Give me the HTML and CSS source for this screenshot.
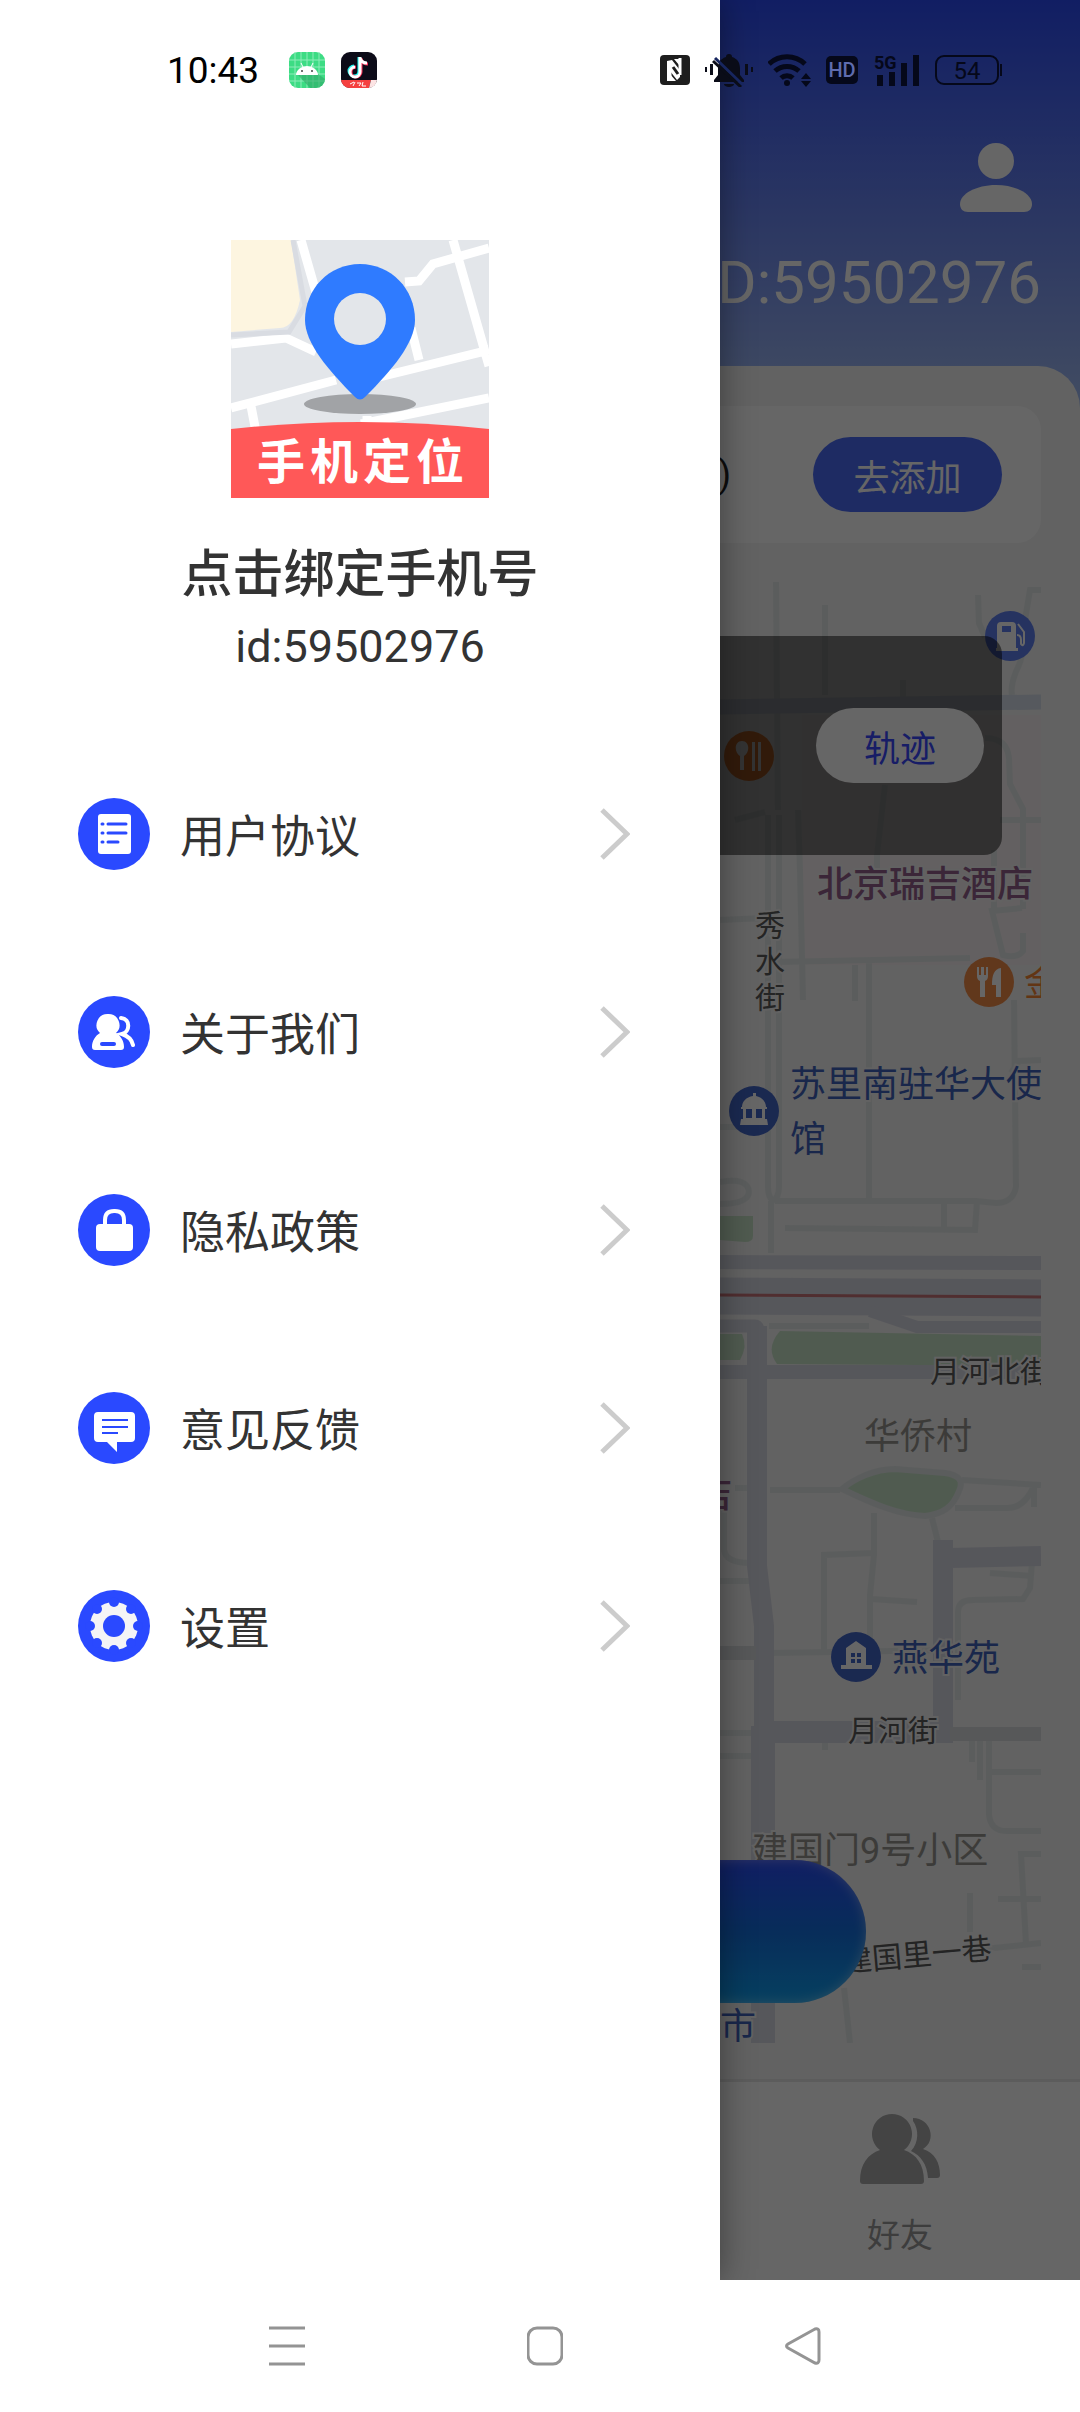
FILE: index.html
```html
<!DOCTYPE html>
<html lang="zh-CN">
<head>
    <meta charset="UTF-8">
    <meta name="viewport" content="width=device-width, initial-scale=1.0">
    <title>手机定位</title>
    <link rel="stylesheet" href="styles.css">
</head>
<body>

    <div class="app">

        <!-- Status bar -->
        <div class="status-bar">
            <div class="status-left">
                <span class="clock">10:43</span>
                <svg class="app-icon" viewBox="0 0 36 36">
                    <rect width="36" height="36" rx="9" fill="#3ddc84"/>
                    <path d="M6 0v36M12 0v36M18 0v36M24 0v36M30 0v36M0 8h36M0 15h36M0 22h36M0 29h36" stroke="#8eecb9" stroke-width="1"/>
                    <path d="M9 23l12 13h6a9 9 0 0 0 9-9l-7-5z" fill="#2fa866" opacity=".6"/>
                    <path d="M7 23a11 9 0 0 1 22 0z" fill="#fff"/>
                    <path d="M12 11l2 4M24 11l-2 4" stroke="#fff" stroke-width="1"/>
                    <circle cx="13" cy="19" r="1" fill="#444"/>
                    <circle cx="23" cy="19" r="1" fill="#444"/>
                </svg>
                <svg class="app-icon" viewBox="0 0 36 36">
                    <rect width="36" height="36" rx="9" fill="#0c0b18"/>
                    <path d="M0 28h30l-2 8H9a9 9 0 0 1-9-8z" fill="#f5403f"/>
                    <path d="M30 28h6a9 9 0 0 1-8 8z" fill="#fde4e4"/>
                    <g fill="none" stroke-width="3">
                        <path d="M18 5v14a5 5 0 1 1-5-5M18 6c1 3 3 5 7 5" stroke="#25f4ee"/>
                        <path d="M20 6v14a5 5 0 1 1-5-5M20 7c1 3 3 5 7 5" stroke="#fe2c55"/>
                        <path d="M19 5v15a5 5 0 1 1-5-5M19 6c1 3 3 5 7 5" stroke="#fff"/>
                    </g>
                    <path d="M9 32l4-2M12 34l2-4M16 31h4l-2 3M22 30l-1 4h4" stroke="#fff" fill="none"/>
                </svg>
            </div>
            <div class="status-right">
                <svg width="30" height="30" viewBox="0 0 30 30">
                    <rect width="30" height="30" rx="4" fill="#1e1e1e"/>
                    <path d="M7 26V6l5-1 7 9v-4l-5-6h6v18l-3 3-7-9v3l6 7z" fill="#fff"/>
                    <path d="M10 9v17M20 20V3" stroke="#fff" stroke-width="3"/>
                    <path d="M13 12l5 7" stroke="#1e1e1e" stroke-width="3"/>
                </svg>
                <svg width="48" height="34" viewBox="0 0 48 34" fill="#0a0c18">
                    <path d="M24 1a3 3 0 0 1 3 3c6 2 8 6 8 12v6l4 5v2H9v-2l4-5v-6c0-6 2-10 8-12a3 3 0 0 1 3-3zM19 31h10a5 3 0 0 1-10 0z"/>
                    <path d="M10 5l28 27" stroke="#17265f" stroke-width="3"/>
                    <path d="M8 8l28 26" stroke="#0a0c18" stroke-width="3"/>
                    <path d="M0 14h2v5h-2zM5 11h3v11h-3zM40 11h3v11h-3zM46 14h2v5h-2z"/>
                </svg>
                <svg width="43" height="34" viewBox="0 0 43 34" fill="none" stroke="#05081a" stroke-width="5">
                    <path d="M1 11a26 26 0 0 1 36 0M7 18a18 18 0 0 1 24 0M13 25a9 9 0 0 1 12 0"/>
                    <circle cx="19" cy="30" r="3" fill="#05081a" stroke="none"/>
                    <path d="M38 20l5 6h-10zM38 34l5-6h-10z" fill="#05081a" stroke="none"/>
                </svg>
                <svg width="32" height="28" viewBox="0 0 32 28">
                    <rect width="32" height="28" rx="5" fill="#05081a"/>
                    <text x="16" y="21" class="hd-text">HD</text>
                </svg>
                <svg width="47" height="36" viewBox="0 0 47 36" fill="#05081a">
                    <text x="1" y="17" class="net-text">5G</text>
                    <path d="M4 23h6v11h-6zM16 20h6v14h-6zM28 11h6v23h-6zM40 3h6v31h-6z"/>
                </svg>
                <svg width="68" height="30" viewBox="0 0 68 30">
                    <rect x="1" y="1" width="62" height="28" rx="8" fill="none" stroke="#05081a" stroke-width="2"/>
                    <rect x="65" y="9" width="2" height="12" fill="#05081a"/>
                    <text x="32" y="24" class="battery-text">54</text>
                </svg>
            </div>
        </div>

        <!-- Home page under the drawer -->
        <header>
            <svg class="user-icon" viewBox="0 0 72 70" fill="#fff">
                <circle cx="36" cy="18" r="18"/>
                <path d="M36 42c20 0 36 9 36 19 0 5-3 8-8 8H8c-5 0-8-3-8-8 0-10 16-19 36-19z"/>
            </svg>
            <p class="user-id">ID:59502976</p>
        </header>

        <main>
            <div class="add-card">
                <span>)</span>
                <button class="btn btn-add">去添加</button>
            </div>

            <div class="map-box">
                <svg class="map" viewBox="39 582 1002 1461" preserveAspectRatio="xMaxYMin slice">
                    <path d="M802 715h239v250H802z" fill="#f8f1f2"/>

                    <!-- Parks -->
                    <g fill="#c9e4c9">
                        <path d="M720 1216h33v20q0 6-8 6l-25-2z"/>
                        <path d="M720 1334h22q6 12-2 26h-20z"/>
                        <path d="M780 1331l261 5v30l-264-2q-12-16 3-33z"/>
                    </g>
                    <path d="M842 1489c12-10 32-20 53-20l50 4c14 2 19 8 14 18-6 16-16 23-34 25-26-1-52-12-83-27z" fill="#c9e4c9" stroke="#e4e9e9" stroke-width="6"/>

                    <!-- Small streets -->
                    <g fill="none" stroke="#e4e9e9" stroke-width="6">
                        <path d="M776 582l2 228M825 605v90M903 680v18M798 810l2 60 3 130M768 815v372q0 10 5 14M779 815v372q0 10-6 14M771 1201v52"/>
                        <path d="M978 595l1 28 6 14M1041 590h-11l-5 30q0 30-6 45-9 18-7 30M985 738q22 0 24 20l1 26 13 25v100M1000 820h41M885 785l-8 70v20M994 850v60M1022 908l-30 3 11 44q14 4 20-4v-18"/>
                        <path d="M720 920l45-2M775 962l195-4M855 965v36M869 962v236M735 820l30-8"/>
                        <path d="M1014 1000l2 187q-3 16-20 16l-20-2H775M785 1228l190 2 2-29M944 1203v26M1041 1060l-22 1-8 12M720 1182q28-5 29 10-1 12-29 12M720 1127h20"/>
                        <path d="M770 1490h70M962 1480l79 5M955 1508h53q16 0 26-22v21M874 1513v42l-4 40v55M874 1553l-50 2v96M772 1653l178-3M871 1599l46 3M932 1518l6 24"/>
                        <path d="M1032 1562l-2 26-7 11-50 1q-15 0-15 12v88M990 1573l42 3M720 1581h35M724 1510v40q2 13 26 13M720 1733h35M720 1756h32M735 1488h15M769 1326h100"/>
                        <path d="M972 1740v22M980 1740v40M989 1740v75q2 16 17 16h35M990 1772h51M825 1742v8M1041 1854h-20l5 90M998 1899h43M970 1893v39M975 1950l66-7M1022 1967h19M844 1988l6 55"/>
                    </g>

                    <!-- Main roads -->
                    <g fill="none" stroke="#d8d9e4">
                        <path d="M720 707l321-5" stroke="#d6dfea" stroke-width="15"/>
                        <path d="M720 1262l321 1" stroke-width="14"/>
                        <path d="M720 1296l321 2" stroke-width="37"/>
                        <path d="M870 1311l47 16h124" stroke-width="12"/>
                        <path d="M720 1326h35q4 0 4 12" stroke-width="13"/>
                        <path d="M757 1326v240l7 60v100l-1 317" stroke-width="20"/>
                        <path d="M763 1726v317" stroke-width="24"/>
                        <path d="M720 1372h321" stroke-width="14"/>
                        <path d="M943 1540v200M950 1558l91-2" stroke-width="20"/>
                        <path d="M755 1732h198" stroke-width="22"/>
                        <path d="M950 1734h91M720 1653h36" stroke="#d9dcdf" stroke-width="14"/>
                    </g>
                    <path d="M720 1295l321 2" stroke="#c87478" stroke-width="3"/>

                    <!-- Places -->
                    <circle cx="1010" cy="636" r="25" fill="#6080f0"/>
                    <path d="M997 626q0-4 4-4h11q4 0 4 4v22h2v3h-22v-3h1z" fill="#fff"/>
                    <path d="M1002 626h9v6h-9z" fill="#6080f0"/>
                    <path d="M1017 635q4 0 4 5v4q2 3 3-1v-11l-6-8" fill="none" stroke="#fff" stroke-width="2"/>

                    <circle cx="749" cy="756" r="25" fill="#f58634"/>
                    <path d="M742 741c8 0 8 12 2 15v14h-4v-14c-6-3-6-15 2-15zM752 742h3v29h-3zM758 742h3v29h-3z" fill="#fff"/>

                    <circle cx="989" cy="982" r="25" fill="#f28c48"/>
                    <path d="M977 967v9q0 4 3 5v16h5v-16q3-1 3-5v-9h-2v8h-2v-8h-3v8h-2v-8zM1001 968v29h-5v-12h-4c0-10 2-16 9-17z" fill="#fff"/>

                    <circle cx="754" cy="1111" r="25" fill="#4366c8"/>
                    <path d="M753 1093h3v3c6 1 10 6 10 11h1v2h-2v10h2l1 6h-28l1-6h2v-10h-2v-2h1c0-5 4-10 11-11z" fill="#fff"/>
                    <path d="M746 1109h6v9h-6zM756 1109h6v9h-6z" fill="#4366c8"/>

                    <circle cx="856" cy="1657" r="25" fill="#4366c8"/>
                    <path d="M856 1641l10 7v17h6v4h-31v-4h5v-17z" fill="#fff"/>
                    <path d="M851 1653h4v4h-4zM857 1653h4v4h-4zM851 1659h4v4h-4zM857 1659h4v4h-4z" fill="#4366c8"/>

                    <g class="place">
                        <text x="817" y="897" class="hotel">北京瑞吉酒店</text>
                        <text x="696" y="1508" class="hotel">店</text>
                        <text x="1024" y="996" class="food">金</text>
                        <text x="790" y="1097" class="site">苏里南驻华大使</text>
                        <text x="790" y="1152" class="site">馆</text>
                        <text x="892" y="1671" class="site">燕华苑</text>
                        <text x="720" y="2039" class="site">市</text>
                        <text x="864" y="1449" class="area">华侨村</text>
                        <text x="752" y="1863" class="area">建国门9号小区</text>
                    </g>
                    <g class="street">
                        <text x="755" y="936">秀</text>
                        <text x="755" y="972">水</text>
                        <text x="755" y="1008">街</text>
                        <text x="930" y="1382">月河北街</text>
                        <text x="848" y="1741">月河街</text>
                        <text x="843" y="1972" transform="rotate(-5 843 1972)">建国里一巷</text>
                    </g>
                </svg>

                <div class="track-panel">
                    <button class="btn btn-track">轨迹</button>
                </div>
                <div class="locate-pill"></div>
            </div>
        </main>

        <nav class="tab-bar">
            <a href="#friends" class="tab">
                <svg width="80" height="70" viewBox="0 0 80 70" fill="#aaa">
                    <path d="M32 0a20 20 0 0 1 12 36c12 4 20 14 20 31 0 2-1 3-3 3H3c-2 0-3-1-3-3 0-17 8-27 20-31A20 20 0 0 1 32 0z"/>
                    <path d="M53 4c18 0 24 23 10 31 12 4 17 14 17 26 0 2-1 3-3 3h-9C67 50 61 42 51 37c8-8 8-22 2-30z"/>
                </svg>
                <span>好友</span>
            </a>
        </nav>

        <div class="mask"></div>

        <!-- Side drawer -->
        <aside class="drawer">
            <svg class="logo" viewBox="0 0 258 258">
                <rect width="258" height="258" fill="#e3e6ea"/>
                <path d="M0 0h60l9 60q-6 28-20 28L0 92z" fill="#fdf5e0"/>
                <g fill="none" stroke="#fff" stroke-width="9">
                    <path d="M70 0l16 56M0 104l55-6 30 14M0 168l105-28M128 142l130-32M174 42l14-1 14-17 56-16M222 0l36 126M180 88l8 32M20 166l5 26M130 184l128-26M136 176v14"/>
                    <path d="M62 0l12 66-16 26-58 3" stroke="#d9dce2" stroke-width="5"/>
                </g>
                <ellipse cx="129" cy="164" rx="56" ry="10" fill="#a1a3a6"/>
                <path d="M129 24c31 0 55 25 55 56 0 23-23 50-50 77q-5 5-10 0C97 130 74 103 74 80c0-31 24-56 55-56z" fill="#2f7bff"/>
                <circle cx="129" cy="79" r="26" fill="#e3e6ea"/>
                <path d="M0 189q129-14 258 0v69H0z" fill="#ff5858"/>
                <text x="132" y="239" class="logo-text">手机定位</text>
            </svg>
            <h1>点击绑定手机号</h1>
            <p class="drawer-id">id:59502976</p>

            <ul class="menu">
                <li>
                    <a href="#agreement">
                        <svg class="menu-icon" viewBox="0 0 72 72">
                            <circle cx="36" cy="36" r="36" fill="#2a49ff"/>
                            <rect x="20" y="16" width="33" height="40" rx="3" fill="#fff"/>
                            <g stroke="#2a49ff" stroke-width="3" stroke-linecap="round">
                                <path d="M24 26h1M30 26h18M24 35h1M30 35h18M24 44h1M30 44h10"/>
                            </g>
                        </svg>
                        <span>用户协议</span>
                        <svg class="arrow" viewBox="0 0 30 52"><path d="M2 2l25 24L2 50"/></svg>
                    </a>
                </li>
                <li>
                    <a href="#about">
                        <svg class="menu-icon" viewBox="0 0 72 72">
                            <circle cx="36" cy="36" r="36" fill="#2a49ff"/>
                            <path d="M30 18a11 11 0 0 1 8 19c5 3 8 8 8 14 0 2-1 3-3 3H17c-2 0-3-1-3-3 0-6 3-11 8-14a11 11 0 0 1 8-19z" fill="#fff"/>
                            <path d="M24 48h12" stroke="#2a49ff" stroke-width="4" stroke-linecap="round"/>
                            <path d="M43 22c10 1 9 14 1 16 6 2 10 6 11 11" fill="none" stroke="#fff" stroke-width="4" stroke-linecap="round"/>
                        </svg>
                        <span>关于我们</span>
                        <svg class="arrow" viewBox="0 0 30 52"><path d="M2 2l25 24L2 50"/></svg>
                    </a>
                </li>
                <li>
                    <a href="#privacy">
                        <svg class="menu-icon" viewBox="0 0 72 72">
                            <circle cx="36" cy="36" r="36" fill="#2a49ff"/>
                            <rect x="18" y="30" width="37" height="27" rx="4" fill="#fff"/>
                            <path d="M27 31v-5q0-9 9-9h1q9 0 9 9v5" fill="none" stroke="#fff" stroke-width="4"/>
                        </svg>
                        <span>隐私政策</span>
                        <svg class="arrow" viewBox="0 0 30 52"><path d="M2 2l25 24L2 50"/></svg>
                    </a>
                </li>
                <li>
                    <a href="#feedback">
                        <svg class="menu-icon" viewBox="0 0 72 72">
                            <circle cx="36" cy="36" r="36" fill="#2a49ff"/>
                            <path d="M20 20h33q4 0 4 4v22q0 4-4 4H39v10L29 50h-9q-4 0-4-4V24q0-4 4-4z" fill="#fff"/>
                            <path d="M24 28h26M24 35h26M24 41h16" stroke="#2a49ff" stroke-width="2"/>
                        </svg>
                        <span>意见反馈</span>
                        <svg class="arrow" viewBox="0 0 30 52"><path d="M2 2l25 24L2 50"/></svg>
                    </a>
                </li>
                <li>
                    <a href="#settings">
                        <svg class="menu-icon" viewBox="0 0 72 72">
                            <circle cx="36" cy="36" r="36" fill="#2a49ff"/>
                            <circle cx="36" cy="36" r="24" fill="#f4f4f6"/>
                            <g fill="#2a49ff">
                                <circle cx="36" cy="36" r="11"/>
                                <circle cx="36" cy="12" r="5"/>
                                <circle cx="53" cy="19" r="5"/>
                                <circle cx="60" cy="36" r="5"/>
                                <circle cx="53" cy="53" r="5"/>
                                <circle cx="36" cy="60" r="5"/>
                                <circle cx="19" cy="53" r="5"/>
                                <circle cx="12" cy="36" r="5"/>
                                <circle cx="19" cy="19" r="5"/>
                            </g>
                        </svg>
                        <span>设置</span>
                        <svg class="arrow" viewBox="0 0 30 52"><path d="M2 2l25 24L2 50"/></svg>
                    </a>
                </li>
            </ul>
        </aside>
    </div>

    <!-- System navigation -->
    <footer>
        <button aria-label="Recent apps">
            <svg width="36" height="44" viewBox="0 0 36 44"><path d="M0 4h36M0 22h36M0 40h36"/></svg>
        </button>
        <button aria-label="Home">
            <svg width="36" height="44" viewBox="0 0 36 44"><rect x="1" y="4" width="34" height="36" rx="9"/></svg>
        </button>
        <button aria-label="Back">
            <svg width="36" height="44" viewBox="0 0 36 44"><path d="M30 5L3 20q-3 2 0 4l27 15q4 1 4-3V8q0-4-4-3z"/></svg>
        </button>
    </footer>

</body>
</html>
```
FILE: styles.css
```css
* {
    box-sizing: border-box;
}

body {
    font-family: Roboto, "Noto Sans CJK SC", sans-serif;
    color: #333;
    background-color: #fff;
    margin: 0;
    min-height: 100vh;
    display: flex;
    flex-direction: column;
}

h1, p, ul {
    margin: 0;
    padding: 0;
}

a {
    color: inherit;
    text-decoration: none;
}

button {
    border: none;
    background: none;
    padding: 0;
    font-family: inherit;
    cursor: pointer;
}

svg {
    display: block;
    flex-shrink: 0;
}

.app {
    flex: 1;
    position: relative;
    overflow: hidden;
    display: flex;
    flex-direction: column;
    background: linear-gradient(#2c4cf8, #a8c2f4 420px);
}

/* Status bar, stays above the drawer */
.status-bar {
    position: absolute;
    top: 0;
    left: 0;
    right: 0;
    z-index: 3;
    height: 140px;
    padding: 0 77px 0 167px;
    display: flex;
    align-items: center;
    justify-content: space-between;
}

.status-left {
    display: flex;
    align-items: center;
    gap: 16px;
}

.clock {
    color: #000;
    font-size: 37px;
    margin-right: 14px;
}

.app-icon {
    width: 36px;
    height: 36px;
}

.status-right {
    display: flex;
    align-items: center;
    gap: 15px;
}

.hd-text {
    font-size: 20px;
    font-weight: 500;
    fill: #5f6cae;
    text-anchor: middle;
}

.net-text {
    font-size: 18px;
    font-weight: 700;
}

.battery-text {
    font-size: 24px;
    fill: #05081a;
    text-anchor: middle;
}

/* Home page */
header {
    height: 366px;
    padding: 143px 39px 0;
    display: flex;
    flex-direction: column;
    align-items: flex-end;
    gap: 34px;
    color: #fff;
}

.user-icon {
    width: 72px;
    height: 70px;
    margin-right: 9px;
}

.user-id {
    font-size: 60px;
    line-height: 72px;
}

main {
    flex: 1;
    display: flex;
    flex-direction: column;
    gap: 39px;
    padding: 40px 39px 36px;
    background-color: #f6f6f6;
    border-radius: 42px 42px 0 0;
}

.add-card {
    display: flex;
    align-items: center;
    justify-content: flex-end;
    gap: 82px;
    padding: 30px 39px;
    height: 137px;
    background-color: #fff;
    border-radius: 24px;
    color: #222;
    font-size: 36px;
}

.btn {
    height: 75px;
    border-radius: 38px;
    font-size: 36px;
}

.btn-add {
    width: 189px;
    background-color: #4b6cf8;
    color: #fff;
}

.map-box {
    flex: 1;
    position: relative;
    min-height: 1200px;
    overflow: hidden;
    background-color: #f4f4f4;
}

.map {
    position: absolute;
    width: 100%;
    height: 100%;
}

.place {
    font-size: 36px;
    stroke: #f4f4f4;
    stroke-width: 4px;
    paint-order: stroke;
}

.street {
    font-size: 30px;
    fill: #5a5a5a;
    stroke: #f4f4f4;
    stroke-width: 4px;
    paint-order: stroke;
}

.hotel {
    fill: #94608c;
    font-weight: 500;
}

.food {
    fill: #f58634;
}

.site {
    fill: #4062bc;
}

.area {
    fill: #96948e;
}

.track-panel {
    position: absolute;
    top: 54px;
    left: 39px;
    right: 39px;
    height: 219px;
    padding: 0 18px;
    display: flex;
    align-items: center;
    justify-content: flex-end;
    background-color: rgba(0, 0, 0, 0.5);
    border-radius: 18px;
}

.btn-track {
    width: 168px;
    background-color: #fff;
    color: #3a4aff;
}

.locate-pill {
    position: absolute;
    bottom: 40px;
    left: 50%;
    width: 652px;
    height: 143px;
    margin-left: -326px;
    border-radius: 72px;
    background: linear-gradient(#2a4cf8, #1470e0 50%, #10a0f0);
    box-shadow: inset 0 0 12px rgba(255, 255, 255, 0.4);
}

.tab-bar {
    height: 201px;
    display: flex;
    justify-content: flex-end;
    background-color: #fff;
    border-top: 3px solid #e6e6e6;
}

.tab {
    width: 33.333%;
    padding-top: 32px;
    display: flex;
    flex-direction: column;
    align-items: center;
    gap: 28px;
    color: #999;
    font-size: 33px;
    line-height: 48px;
}

.mask {
    position: absolute;
    top: 0;
    right: 0;
    bottom: 0;
    left: 0;
    z-index: 1;
    background-color: rgba(0, 0, 0, 0.6);
}

/* Side drawer */
.drawer {
    position: absolute;
    top: 0;
    bottom: 0;
    left: 0;
    z-index: 2;
    width: 66.667%;
    padding-top: 240px;
    background-color: #fff;
    box-shadow: 0 0 32px rgba(0, 0, 0, 0.4);
    text-align: center;
}

.logo {
    width: 258px;
    height: 258px;
    margin: 0 auto 47px;
}

.logo-text {
    font-size: 48px;
    font-weight: 700;
    letter-spacing: 5px;
    fill: #fff;
    text-anchor: middle;
}

.drawer h1 {
    font-size: 51px;
    font-weight: 500;
    line-height: 60px;
}

.drawer-id {
    margin-top: 16px;
    font-size: 45px;
    line-height: 52px;
}

.menu {
    margin-top: 125px;
    padding: 0 90px 0 78px;
    display: flex;
    flex-direction: column;
    gap: 126px;
    list-style: none;
    text-align: left;
}

.menu a {
    display: flex;
    align-items: center;
    gap: 30px;
    font-size: 45px;
    line-height: 64px;
}

.menu span {
    padding-top: 8px;
}

.menu-icon {
    width: 72px;
    height: 72px;
}

.arrow {
    width: 30px;
    height: 52px;
    margin-left: auto;
    fill: none;
    stroke: #ccc;
    stroke-width: 5px;
}

/* System navigation */
footer {
    height: 132px;
    padding-left: 10px;
    display: flex;
    align-items: center;
    justify-content: center;
    gap: 222px;
    background-color: #fff;
}

footer svg {
    fill: none;
    stroke: #949494;
    stroke-width: 3px;
}
```
